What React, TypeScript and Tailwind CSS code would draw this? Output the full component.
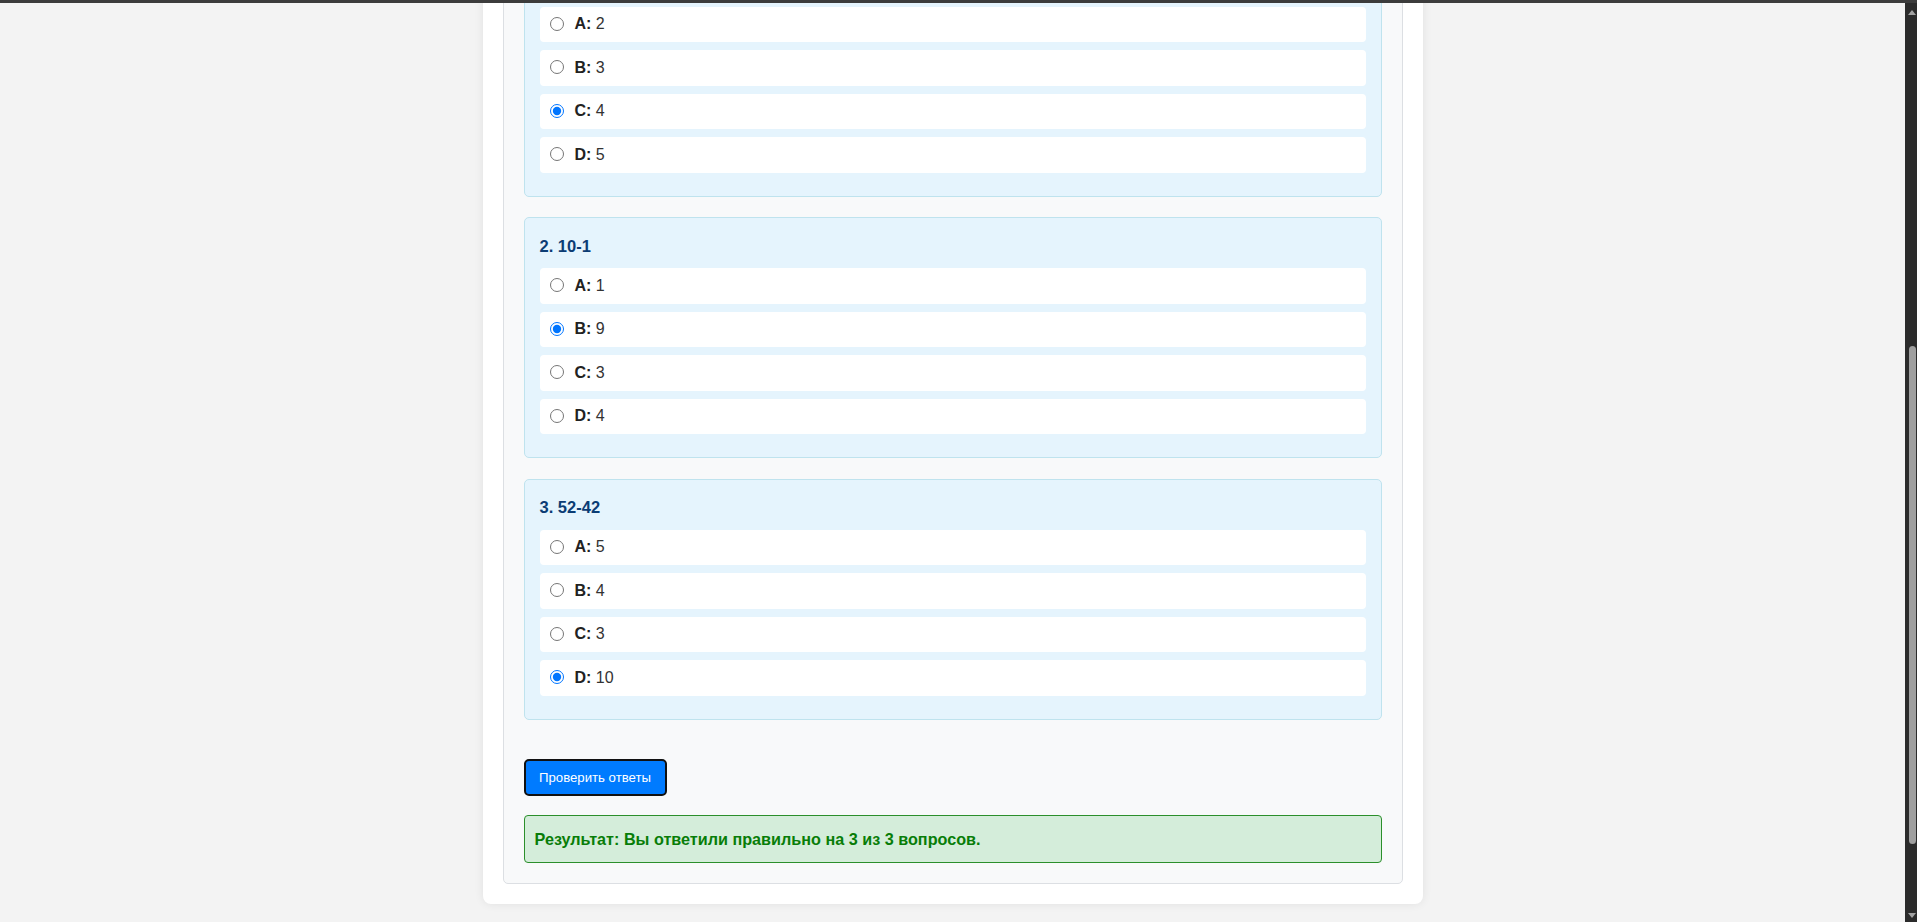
import React, { useState } from 'react';

type Question = {
  id: number;
  text: string;
  options: { key: string; value: string }[];
  correct: string;
};

const questions: Question[] = [
  {
    id: 1,
    text: '2+2',
    options: [
      { key: 'A', value: '2' },
      { key: 'B', value: '3' },
      { key: 'C', value: '4' },
      { key: 'D', value: '5' },
    ],
    correct: 'C',
  },
  {
    id: 2,
    text: '10-1',
    options: [
      { key: 'A', value: '1' },
      { key: 'B', value: '9' },
      { key: 'C', value: '3' },
      { key: 'D', value: '4' },
    ],
    correct: 'B',
  },
  {
    id: 3,
    text: '52-42',
    options: [
      { key: 'A', value: '5' },
      { key: 'B', value: '4' },
      { key: 'C', value: '3' },
      { key: 'D', value: '10' },
    ],
    correct: 'D',
  },
];

const Scrollbar: React.FC = () => (
  <div className="w-[12px] shrink-0 bg-[#2b2b2b] flex flex-col items-center">
    <svg width="8" height="5" viewBox="0 0 8 5" className="mt-[7px] ml-[2px]">
      <path d="M0 5 L4 0 L8 5 Z" fill="#a3a3a3" />
    </svg>
    <div className="mt-[331px] ml-[3px] h-[498px] w-[7.5px] rounded-full bg-[#9f9f9f]" />
    <div className="flex-1" />
    <svg width="8" height="5" viewBox="0 0 8 5" className="mb-[4px] ml-[2px]">
      <path d="M0 0 L8 0 L4 5 Z" fill="#a3a3a3" />
    </svg>
  </div>
);

const App: React.FC = () => {
  const [answers, setAnswers] = useState<Record<number, string>>({ 1: 'C', 2: 'B', 3: 'D' });
  const [score, setScore] = useState<number | null>(3);

  const checkAnswers = () => {
    const correct = questions.filter((q) => answers[q.id] === q.correct).length;
    setScore(correct);
  };

  return (
    <div className="h-[922px] w-full overflow-hidden bg-[#f3f3f3] flex flex-col font-['Liberation_Sans',Arial,sans-serif]">
      <div className="h-[3px] shrink-0 bg-[#3c3c3c]" />
      <div className="flex flex-1 min-h-0">
        <main className="flex-1 min-w-0 overflow-hidden">
          <div className="mx-auto mt-[-88.2px] w-[940px] rounded-[8px] bg-white p-[20px] shadow-[0_0_10px_rgba(0,0,0,0.08)]">
            <div className="rounded-[5px] border border-[#dcdfe3] bg-[#f8f9fa] p-[20px]">
              {questions.map((q) => (
                <div
                  key={q.id}
                  className="mb-[20.5px] rounded-[5px] border border-[#bfe3ee] bg-[#e5f4fd] px-[15px] pt-[18.6px] pb-[15px]"
                >
                  <div className="mb-[12.4px] text-[16.5px] leading-[19px] font-bold text-[#0b3c74]">
                    {q.id}. {q.text}
                  </div>
                  {q.options.map((o) => (
                    <label
                      key={o.key}
                      className="mb-[8px] flex h-[35.5px] cursor-pointer items-center rounded-[4px] bg-white pl-[10px] text-[16px] text-[#333]"
                    >
                      <input
                        type="radio"
                        name={`q${q.id}`}
                        checked={answers[q.id] === o.key}
                        onChange={() => setAnswers({ ...answers, [q.id]: o.key })}
                        className="m-0 mr-[11px] mt-[-2px] h-[14px] w-[14px]"
                      />
                      <span className="mt-[-1px]">
                        <b className="text-[#222]">{o.key}:</b> {o.value}
                      </span>
                    </label>
                  ))}
                </div>
              ))}

              <button
                onClick={checkAnswers}
                className="mt-[39.5px] flex h-[36.5px] w-[143px] items-center justify-center rounded-[5px] border-2 border-[#111] bg-[#007bff] text-[13.2px] text-white"
              >
                Проверить ответы
              </button>

              {score !== null && (
                <div className="mt-[19.2px] rounded-[4px] border border-[#2b8f2b] bg-[#d4edda] px-[10px] py-[13px] text-[16.2px] leading-[20.3px] font-bold text-[#087d08]">
                  Результат: Вы ответили правильно на {score} из {questions.length} вопросов.
                </div>
              )}
            </div>
          </div>
        </main>
        <Scrollbar />
      </div>
    </div>
  );
};

export default App;
